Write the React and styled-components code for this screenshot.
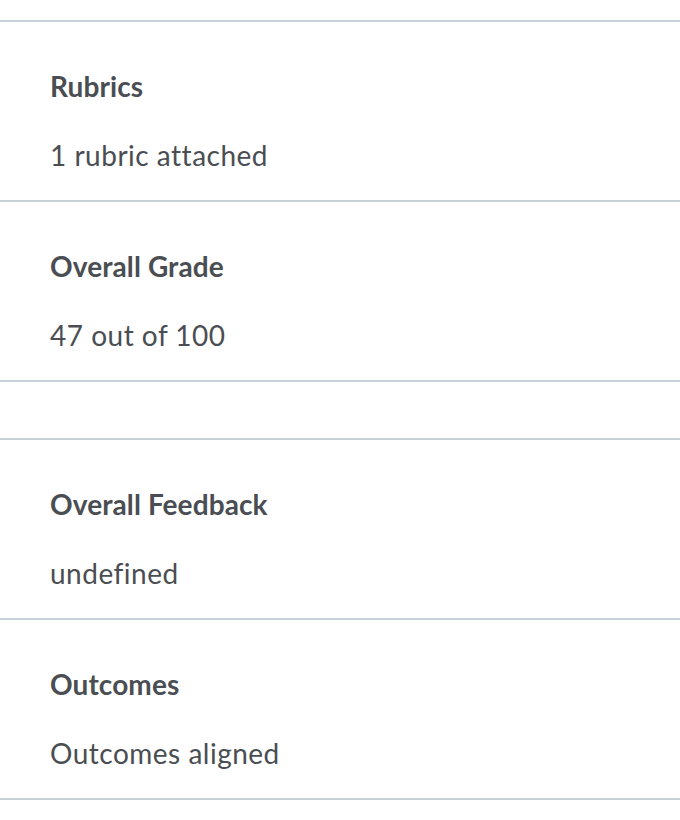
import React from 'react';
import styled, { createGlobalStyle } from 'styled-components';

const GlobalStyle = createGlobalStyle`
    html, body {
        margin: 0;
        padding: 0;
        background: #ffffff;
    }
    body {
        font-family: Lato, "Open Sans", "Liberation Sans", sans-serif;
        color: #4a4e53;
    }
`;

const sections = [
    { title: 'Rubrics', value: '1 rubric attached' },
    { title: 'Overall Grade', value: '47 out of 100' },
    { empty: true },
    { title: 'Overall Feedback', value: String(undefined) },
    { title: 'Outcomes', value: 'Outcomes aligned' },
];

const App = () => {
    return (
        <>
            <GlobalStyle />
            <Page>
                <List>
                    {sections.map((section, index) =>
                        section.empty ? (
                            <Spacer key={index} />
                        ) : (
                            <Section key={index}>
                                <Title>{section.title}</Title>
                                <Value>{section.value}</Value>
                            </Section>
                        )
                    )}
                </List>
            </Page>
        </>
    );
};

const Page = styled.div`
    padding-top: 20px;
    width: 680px;
`;

const List = styled.div`
    display: flex;
    flex-direction: column;
    border-top: 2px solid #c9d1d8;
`;

const Section = styled.div`
    display: flex;
    flex-direction: column;
    gap: 27px;
    height: 180px;
    box-sizing: border-box;
    padding: 43px 50px 0;
    border-bottom: 2px solid #c9d1d8;
`;

const Spacer = styled.div`
    height: 58px;
    box-sizing: border-box;
    border-bottom: 2px solid #c9d1d8;
`;

const Title = styled.div`
    font-size: 28px;
    line-height: 42px;
    font-weight: 700;
    letter-spacing: 0.1px;
`;

const Value = styled.div`
    font-size: 28px;
    line-height: 42px;
    font-weight: 400;
    letter-spacing: 0.5px;
    font-variant-ligatures: none;
`;

export default App;
